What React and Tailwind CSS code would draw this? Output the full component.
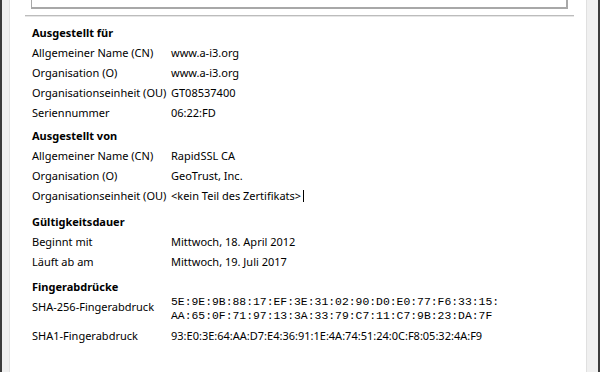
import React from "react";

const sections = [
  {
    title: "Ausgestellt für",
    gap: "mt-[6px]",
    rows: [
      ["Allgemeiner Name (CN)", "www.a-i3.org"],
      ["Organisation (O)", "www.a-i3.org"],
      ["Organisationseinheit (OU)", "GT08537400"],
      ["Seriennummer", "06:22:FD"],
    ],
  },
  {
    title: "Ausgestellt von",
    gap: "mt-[3px]",
    rows: [
      ["Allgemeiner Name (CN)", "RapidSSL CA"],
      ["Organisation (O)", "GeoTrust, Inc."],
      ["Organisationseinheit (OU)", "<kein Teil des Zertifikats>", true],
    ],
  },
  {
    title: "Gültigkeitsdauer",
    gap: "mt-[6px]",
    rows: [
      ["Beginnt mit", "Mittwoch, 18. April 2012"],
      ["Läuft ab am", "Mittwoch, 19. Juli 2017"],
    ],
  },
];

const Row = ({ label, value, caret }) => (
  <div className="flex h-[20px] items-center whitespace-nowrap">
    <div className="w-[139px] shrink-0">{label}</div>
    <div className="flex items-center">
      {value}
      {caret && <span className="ml-[2px] inline-block h-[12px] w-px bg-black" />}
    </div>
  </div>
);

export default function App() {
  return (
    <div
      className="flex h-[372px] w-[600px] overflow-hidden bg-white text-[11px] text-black"
      style={{ fontFamily: '"Noto Sans", "Open Sans", sans-serif' }}
    >
      <div className="w-[2px] bg-[#3c3c3c]" />
      <div className="w-[7px] bg-[#f0f0f0]" />
      <div className="w-px bg-[#e2e2e2]" />

      {/* content */}
      <div className="flex-1">
        <div className="-mt-[15px] ml-[21px] flex h-[24px] w-[537px] items-center whitespace-nowrap border-b-2 border-l border-r-2 border-[#a8a8a8] px-[2px]">
          SSL-Server-Zertifikat
        </div>
        <div className="ml-[15px] mt-[6px] h-[2px] w-[549px] border-b border-t border-b-[#e6e6e6] border-t-[#bcbcbc]" />

        <div className="pl-[22px]">
          {sections.map((s) => (
            <div key={s.title} className={s.gap}>
              <div className="flex h-[20px] items-center font-bold">{s.title}</div>
              {s.rows.map(([l, v, c]) => (
                <Row key={l} label={l} value={v} caret={c} />
              ))}
            </div>
          ))}

          <div className="mt-[5px]">
            <div className="flex h-[20px] items-center font-bold">Fingerabdrücke</div>
            <div className="flex h-[29px] items-start whitespace-nowrap">
              <div className="flex h-[20px] w-[139px] shrink-0 items-center">SHA-256-Fingerabdruck</div>
              <div
                className="-mt-[2px] text-[11.4px] leading-[14px] text-black"
                style={{ fontFamily: '"Liberation Mono", monospace' }}
              >
                <div>5E:9E:9B:88:17:EF:3E:31:02:90:D0:E0:77:F6:33:15:</div>
                <div>AA:65:0F:71:97:13:3A:33:79:C7:11:C7:9B:23:DA:7F</div>
              </div>
            </div>
            <Row label="SHA1-Fingerabdruck" value="93:E0:3E:64:AA:D7:E4:36:91:1E:4A:74:51:24:0C:F8:05:32:4A:F9" />
          </div>
        </div>
      </div>

      <div className="w-px bg-[#e0e0e0]" />
      <div className="w-[11px] bg-[#f0f0f0]" />
      <div className="w-[2px] bg-[#3c3c3c]" />
    </div>
  );
}
